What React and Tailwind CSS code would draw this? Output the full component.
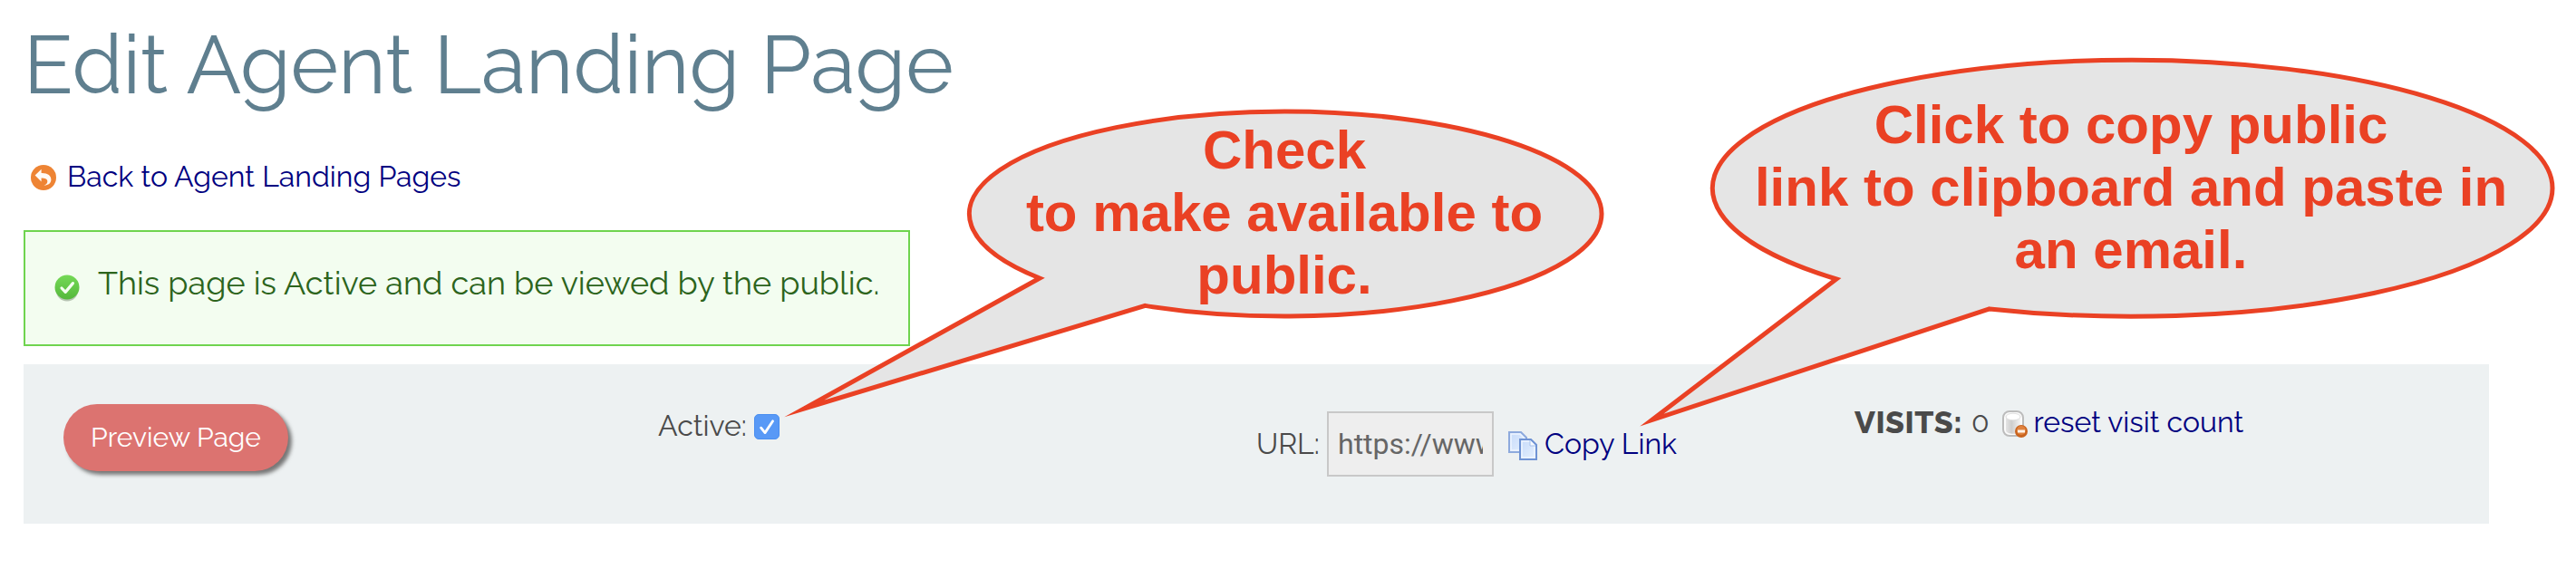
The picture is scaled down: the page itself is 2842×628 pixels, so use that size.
function BackIcon() {
  return (
    <svg className="mt-0.5 size-7 shrink-0" viewBox="0 0 28 28">
      <circle cx="14" cy="14" r="14" fill="#ee8434" />
      <path
        d="M4.6 11.6 L11.6 4.8 V8.9 C18.6 8.7 22.6 11.8 22.4 16.6 C22.2 20.4 19 22.8 14.4 22.6 C17.4 21.4 18.8 19.6 18.2 17.2 C17.6 15.2 15.4 14.4 11.6 14.5 V18.4 Z"
        fill="#fffaf5"
      />
    </svg>
  );
}

function SuccessIcon() {
  return (
    <svg className="mt-2.5 h-8 w-7 shrink-0" viewBox="0 0 28 32">
      <defs>
        <linearGradient id="green" x1="0" y1="0" x2="0" y2="1">
          <stop offset="0" stopColor="#74d956" />
          <stop offset="1" stopColor="#55b83c" />
        </linearGradient>
      </defs>
      <ellipse cx="14" cy="17.5" rx="12.5" ry="13" fill="#8f9f8a" opacity="0.6" />
      <circle cx="14" cy="15" r="13.5" fill="url(#green)" />
      <path
        d="M8 16 L12.2 20.4 L20.4 10.6"
        fill="none"
        stroke="#f4fff0"
        strokeWidth="3.2"
        strokeLinecap="round"
        strokeLinejoin="round"
      />
    </svg>
  );
}

function CopyIcon() {
  return (
    <svg className="mt-1 size-8 shrink-0" viewBox="0 0 32 32">
      <defs>
        <linearGradient id="sheet" x1="0" y1="0" x2="1" y2="1">
          <stop offset="0" stopColor="#c6dafa" />
          <stop offset="1" stopColor="#e6f1fe" />
        </linearGradient>
      </defs>
      <path d="M1 1 H14 L20 7 V23 H1 Z" fill="url(#sheet)" stroke="#8eaadd" strokeWidth="2" />
      <path d="M3 3 H13 L18 8 V21 H3 Z" fill="none" stroke="#eef5ff" strokeWidth="1.5" />
      <path d="M13 9 H25 L31 15 V31 H13 Z" fill="url(#sheet)" stroke="#6f93d4" strokeWidth="2" />
      <path d="M15 11 H24 L29 16 V29 H15 Z" fill="none" stroke="#eef5ff" strokeWidth="1.5" />
      <path d="M24 10 V16 H30" fill="#f6faff" stroke="#a9c2ec" strokeWidth="1" />
    </svg>
  );
}

function DatabaseIcon() {
  return (
    <svg className="mt-1 h-8 w-7 shrink-0" viewBox="0 0 28 32">
      <defs>
        <linearGradient id="drum" x1="0" y1="0" x2="1" y2="0">
          <stop offset="0" stopColor="#e4e4e4" />
          <stop offset="0.4" stopColor="#cecece" />
          <stop offset="1" stopColor="#f4f4f4" />
        </linearGradient>
      </defs>
      <rect x="1" y="2" width="22" height="27" rx="7" fill="#fbfbfb" stroke="#bcbcbc" strokeWidth="2" />
      <path d="M4 8 V23 C4 28 20 28 20 23 V8 Z" fill="url(#drum)" />
      <ellipse cx="12" cy="8" rx="8" ry="3.8" fill="#ffffff" stroke="#dedede" strokeWidth="1" />
      <circle cx="21" cy="24" r="7" fill="#c9641f" />
      <circle cx="21" cy="23" r="5" fill="#e0833f" />
      <rect x="17" y="22.5" width="8" height="3" fill="#fff3e8" />
    </svg>
  );
}

function Checkbox() {
  return (
    <span className="mt-0.5 flex size-7 items-center justify-center rounded-[5px] border border-[#4a8ff0] bg-[#5899f6]">
      <svg className="size-[26px]" viewBox="0 0 26 26">
        <path
          d="M6.6 14.2 L11 19.6 L19.6 6.8"
          fill="none"
          stroke="#ffffff"
          strokeWidth="2.8"
          strokeLinecap="round"
          strokeLinejoin="round"
        />
      </svg>
    </span>
  );
}

// Speech bubbles drawn over the page
function Callouts() {
  return (
    <div className="pointer-events-none absolute inset-0 font-['Liberation_Sans',Arial,sans-serif] text-[60px] leading-[69px] font-bold text-[#ea4124]">
      <svg className="absolute inset-0 h-[628px] w-[2842px]" viewBox="0 0 2842 628">
        <g fill="#e5e5e5" stroke="#ea4124" strokeWidth="5" strokeMiterlimit="14">
          <path d="M1147 307 A349.5 113 0 0 1 1417.5 123 A349.5 113 0 0 1 1767 236 A349.5 113 0 0 1 1263.5 337.4 L887 451 Z" />
          <path d="M2026 308 A464 141.5 0 0 1 2352 66.2 A464 141.5 0 0 1 2816 207.7 A464 141.5 0 0 1 2195 340.9 L1822.5 463.5 Z" />
        </g>
      </svg>
      <p className="absolute top-[131px] left-[1067px] w-[700px] text-center">
        Check
        <br />
        to make available to
        <br />
        public.
      </p>
      <p className="absolute top-[103px] left-[1889px] w-[924px] text-center">
        Click to copy public
        <br />
        link to clipboard and paste in
        <br />
        an email.
      </p>
    </div>
  );
}

function App() {
  return (
    <div className="relative h-[628px] w-[2842px] overflow-hidden bg-white px-[26px] pt-[26px] font-['Raleway','Lato',sans-serif] text-[32px] leading-10 text-[#4a4a4a]">
      <h1 className="text-[90px] leading-[90px] text-[#5f7f8f]">Edit Agent Landing Page</h1>

      <a href="#" className="mt-[59px] flex items-center gap-3 pl-2 text-[#000080]">
        <BackIcon />
        Back to Agent Landing Pages
      </a>

      <div className="mt-[39px] flex h-32 w-[978px] items-start gap-5 border-2 border-[#6fd44f] bg-[#f3fdf0] pt-9 pl-8 text-[36px] whitespace-nowrap text-[#2c641c]">
        <SuccessIcon />
        This page is Active and can be viewed by the public.
      </div>

      <div className="mt-5 grid h-44 w-[2720px] grid-cols-[660px_660px_660px_660px] items-start bg-[#edf1f2] pl-10 whitespace-nowrap">
        <div className="pt-11 pl-1">
          <button
            type="button"
            className="h-[74px] w-[248px] rounded-full bg-[#dc7370] text-[30px] text-white shadow-[4px_4px_4px_#777777]"
          >
            Preview Page
          </button>
        </div>

        <label className="flex items-center gap-2 pt-12">
          Active:
          <Checkbox />
        </label>

        <div className="flex items-center pt-[52px]">
          <span className="w-[78px]">URL:</span>
          <div className="flex h-[72px] w-[184px] items-center border-2 border-[#c8c8c8] bg-[#eeeeee] pr-2.5 pl-2.5 font-['Roboto',sans-serif] text-[#666666]">
            <span className="w-full overflow-hidden">https://www</span>
          </div>
          <a href="#" className="ml-4 flex items-center gap-2 text-[#000080]">
            <CopyIcon />
            Copy Link
          </a>
        </div>

        <div className="flex items-center pt-11">
          <span className="w-[120px] text-[34px] font-extrabold tracking-[0.5px]">VISITS:</span>
          <span className="ml-[9px]">0</span>
          <a href="#" className="ml-3.5 flex items-center gap-[7px] text-[#000080]">
            <DatabaseIcon />
            reset visit count
          </a>
        </div>
      </div>

      <Callouts />
    </div>
  );
}

export default App;
